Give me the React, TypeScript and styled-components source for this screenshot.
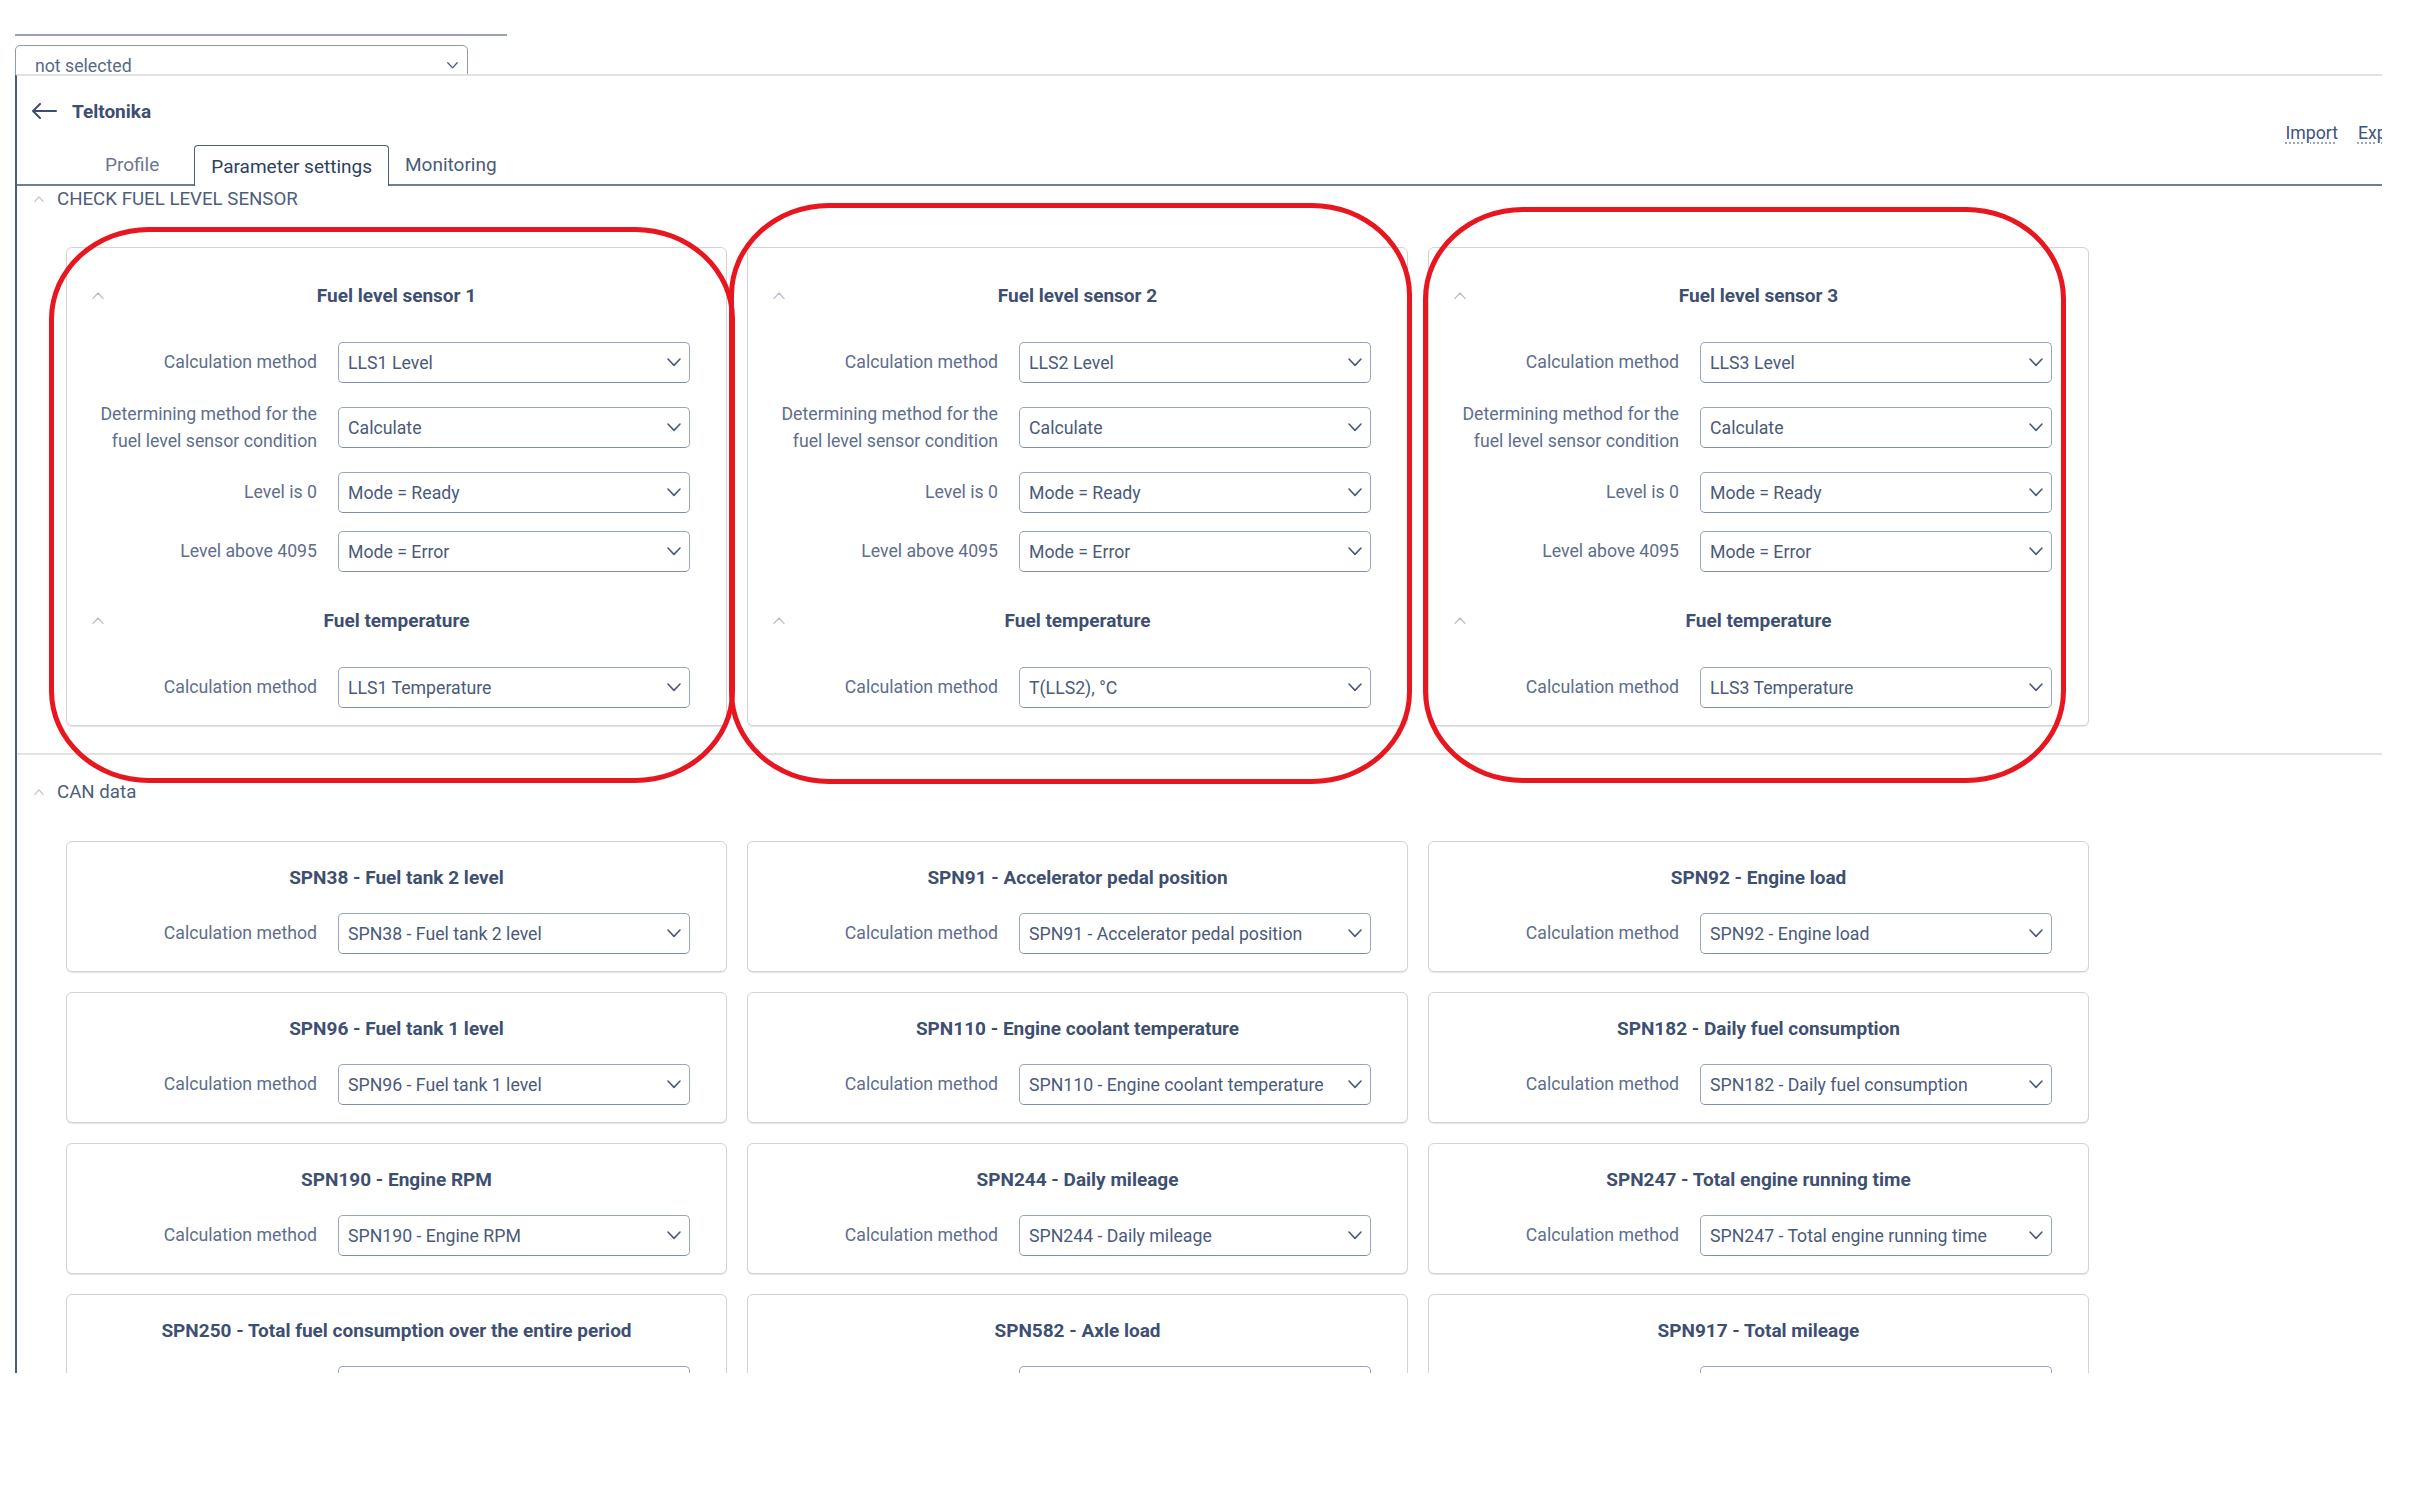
import React from "react";
import styled, { createGlobalStyle } from "styled-components";

const GlobalStyle = createGlobalStyle`
  body {
    margin: 0;
    background: #ffffff;
    font-family: Roboto, "Liberation Sans", sans-serif;
    color: #4b5a79;
  }
  * {
    box-sizing: border-box;
  }
`;

type Field = { label: React.ReactNode; value: string };

const sensors = [1, 2, 3].map((n) => ({
  title: `Fuel level sensor ${n}`,
  fields: [
    { label: "Calculation method", value: `LLS${n} Level` },
    {
      label: (
        <>
          Determining method for the
          <br />
          fuel level sensor condition
        </>
      ),
      value: "Calculate",
    },
    { label: "Level is 0", value: "Mode = Ready" },
    { label: "Level above 4095", value: "Mode = Error" },
  ] as Field[],
  temperature: n === 2 ? "T(LLS2), °C" : `LLS${n} Temperature`,
}));

const canItems = [
  "SPN38 - Fuel tank 2 level",
  "SPN91 - Accelerator pedal position",
  "SPN92 - Engine load",
  "SPN96 - Fuel tank 1 level",
  "SPN110 - Engine coolant temperature",
  "SPN182 - Daily fuel consumption",
  "SPN190 - Engine RPM",
  "SPN244 - Daily mileage",
  "SPN247 - Total engine running time",
  "SPN250 - Total fuel consumption over the entire period",
  "SPN582 - Axle load",
  "SPN917 - Total mileage",
];

// red marker rings drawn over the screenshot
const highlights = [
  { x: 32, y: 151, w: 686, h: 556 },
  { x: 712, y: 127, w: 683, h: 581 },
  { x: 1406, y: 131, w: 643, h: 576 },
];

const Page = styled.div`
  padding-top: 34px;
`;

const TopLine = styled.div`
  margin-left: 15px;
  width: 492px;
  border-top: 2px solid #97a2b8;
`;

const DropdownClip = styled.div`
  margin: 9px 0 0 15px;
  width: 453px;
  height: 29px;
  overflow: hidden;
`;

const Dropdown = styled.div`
  height: 41px;
  border: 1.5px solid #8e9ab2;
  border-radius: 5px;
  display: flex;
  align-items: center;
  justify-content: space-between;
  padding: 0 9px 0 19px;
  font-size: 17.7px;
  color: #5b6a88;
`;

const Panel = styled.div`
  position: relative;
  margin-left: 15px;
  width: 2367px;
  height: 1299px;
  border-left: 2px solid #4b5b7b;
  border-top: 2px solid #e2e2e2;
  overflow: hidden;
`;

const HeaderRow = styled.div`
  display: flex;
  justify-content: space-between;
  width: calc(100% + 45px);
  height: 69px;
  padding: 0 18px 0 14px;
`;

const BackTitle = styled.div`
  display: flex;
  align-items: center;
  gap: 15px;
  height: 26px;
  margin-top: 22px;
  font-size: 19px;
  font-weight: 700;
  color: #3d4e71;
`;

const Links = styled.div`
  align-self: flex-end;
  display: flex;
  gap: 20px;
  line-height: 24px;
  font-size: 17.7px;
`;

const Link = styled.a`
  color: #3d5380;
  text-decoration: underline dotted #8a9bc0;
  text-underline-offset: 4px;
  cursor: pointer;
`;

const TabBar = styled.div`
  display: flex;
  align-items: flex-end;
  height: 41px;
  padding-left: 72px;
  border-bottom: 2px solid #6f7e99;
`;

const Tab = styled.div<{ $active?: boolean; $color: string }>`
  height: ${(p) => (p.$active ? "41px" : "39px")};
  padding: 0 16px;
  display: flex;
  align-items: center;
  font-size: 19px;
  color: ${(p) => p.$color};
  background: #fff;
  border: ${(p) => (p.$active ? "1.5px solid #4b5b7b" : "none")};
  border-bottom: none;
  border-radius: 4px 4px 0 0;
  margin-bottom: ${(p) => (p.$active ? "-2px" : "0")};
  &:first-child {
    margin-right: 19px;
  }
`;

const Section = styled.section<{ $divided?: boolean; $padTop: number; $padBottom: number }>`
  padding-top: ${(p) => p.$padTop}px;
  padding-bottom: ${(p) => p.$padBottom}px;
  border-top: ${(p) => (p.$divided ? "2px solid #e2e2e2" : "none")};
`;

const SectionHeader = styled.div`
  display: flex;
  align-items: center;
  gap: 13px;
  height: 26px;
  padding-left: 17px;
  font-size: 18.7px;
  color: #4d5d7d;
`;

const SectionBody = styled.div<{ $gap: number }>`
  margin-top: ${(p) => p.$gap}px;
  padding-left: 49px;
`;

const CardGrid = styled.div`
  display: grid;
  grid-template-columns: repeat(3, 661px);
  gap: 20px;
  align-items: start;
`;

const Card = styled.div<{ $pad: string }>`
  border: 1px solid #d3d3d3;
  border-radius: 6px;
  box-shadow: 0 1px 1px rgba(0, 0, 0, 0.1);
  padding: ${(p) => p.$pad};
  background: #fff;
`;

const Group = styled.div`
  & + & {
    margin-top: 33px;
  }
`;

const GroupHeader = styled.div`
  display: grid;
  grid-template-columns: 1fr auto 1fr;
  align-items: center;
  height: 32px;
  padding: 0 25px;
`;

const CardTitle = styled.div`
  grid-column: 2;
  text-align: center;
  line-height: 32px;
  font-size: 19px;
  font-weight: 700;
  color: #3e4f72;
`;

const CanTitle = styled(CardTitle)`
  margin-bottom: 19px;
`;

const Rows = styled.div`
  display: flex;
  flex-direction: column;
  gap: 18px;
  margin-top: 30px;
`;

const Row = styled.div`
  display: grid;
  grid-template-columns: 250px 352px;
  column-gap: 21px;
  align-items: center;
`;

const Label = styled.div`
  text-align: right;
  font-size: 17.7px;
  line-height: 26.5px;
  color: #5e6e8c;
`;

const Select = styled.div`
  height: 41px;
  display: flex;
  align-items: center;
  justify-content: space-between;
  padding: 0 8px 0 9px;
  border: 1.5px solid #9aa6bd;
  border-bottom-color: #7f8daa;
  border-radius: 5px;
  font-size: 17.7px;
  color: #4b5a7a;
  white-space: nowrap;
  overflow: hidden;
`;

const Highlight = styled.div<{ $x: number; $y: number; $w: number; $h: number }>`
  position: absolute;
  left: ${(p) => p.$x}px;
  top: ${(p) => p.$y}px;
  width: ${(p) => p.$w}px;
  height: ${(p) => p.$h}px;
  border: 5px solid #e8161e;
  border-radius: 100px / 92px;
  pointer-events: none;
`;

const Chevron = ({ size = 14 }: { size?: number }) => (
  <svg width={size} height={size * 0.6} viewBox="0 0 14 8.4" fill="none">
    <path d="M1 1 L7 7.4 L13 1" stroke="#4b5a7a" strokeWidth="1.6" strokeLinecap="round" strokeLinejoin="round" />
  </svg>
);

const Caret = ({ size = 12 }: { size?: number }) => (
  <svg width={size} height={size * 0.6} viewBox="0 0 12 7.2" fill="none">
    <path d="M1 6.4 L6 1 L11 6.4" stroke="#b9c0cd" strokeWidth="1.4" strokeLinecap="round" strokeLinejoin="round" />
  </svg>
);

const BackArrow = () => (
  <svg width="26" height="16" viewBox="0 0 26 16" fill="none">
    <path d="M25 8 H2 M9 1 L2 8 L9 15" stroke="#3d4e71" strokeWidth="2" strokeLinecap="round" strokeLinejoin="round" />
  </svg>
);

function FieldRow({ label, value }: Field) {
  return (
    <Row>
      <Label>{label}</Label>
      <Select>
        <span>{value}</span>
        <Chevron />
      </Select>
    </Row>
  );
}

export default function App() {
  return (
    <Page>
      <GlobalStyle />
      <TopLine />
      <DropdownClip>
        <Dropdown>
          <span>not selected</span>
          <Chevron size={11} />
        </Dropdown>
      </DropdownClip>

      <Panel>
        <HeaderRow>
          <BackTitle>
            <BackArrow />
            Teltonika
          </BackTitle>
          <Links>
            <Link>Import</Link>
            <Link>Export</Link>
          </Links>
        </HeaderRow>

        <TabBar>
          <Tab $color="#6b7690">Profile</Tab>
          <Tab $active $color="#2f3f5f">
            Parameter settings
          </Tab>
          <Tab $color="#4b5a79">Monitoring</Tab>
        </TabBar>

        <Section $padTop={0} $padBottom={27}>
          <SectionHeader>
            <Caret size={10} />
            CHECK FUEL LEVEL SENSOR
          </SectionHeader>
          <SectionBody $gap={35}>
            <CardGrid>
              {sensors.map((s) => (
                <Card key={s.title} $pad="32px 0 17px">
                  <Group>
                    <GroupHeader>
                      <Caret />
                      <CardTitle>{s.title}</CardTitle>
                    </GroupHeader>
                    <Rows>
                      {s.fields.map((f, i) => (
                        <FieldRow key={i} label={f.label} value={f.value} />
                      ))}
                    </Rows>
                  </Group>
                  <Group>
                    <GroupHeader>
                      <Caret />
                      <CardTitle>Fuel temperature</CardTitle>
                    </GroupHeader>
                    <Rows>
                      <FieldRow label="Calculation method" value={s.temperature} />
                    </Rows>
                  </Group>
                </Card>
              ))}
            </CardGrid>
          </SectionBody>
        </Section>

        <Section $divided $padTop={24} $padBottom={40}>
          <SectionHeader>
            <Caret size={10} />
            CAN data
          </SectionHeader>
          <SectionBody $gap={36}>
            <CardGrid>
              {canItems.map((item) => (
                <Card key={item} $pad="20px 0 17px">
                  <CanTitle>{item}</CanTitle>
                  <FieldRow label="Calculation method" value={item} />
                </Card>
              ))}
            </CardGrid>
          </SectionBody>
        </Section>

        {highlights.map((h, i) => (
          <Highlight key={i} $x={h.x} $y={h.y} $w={h.w} $h={h.h} />
        ))}
      </Panel>
    </Page>
  );
}
